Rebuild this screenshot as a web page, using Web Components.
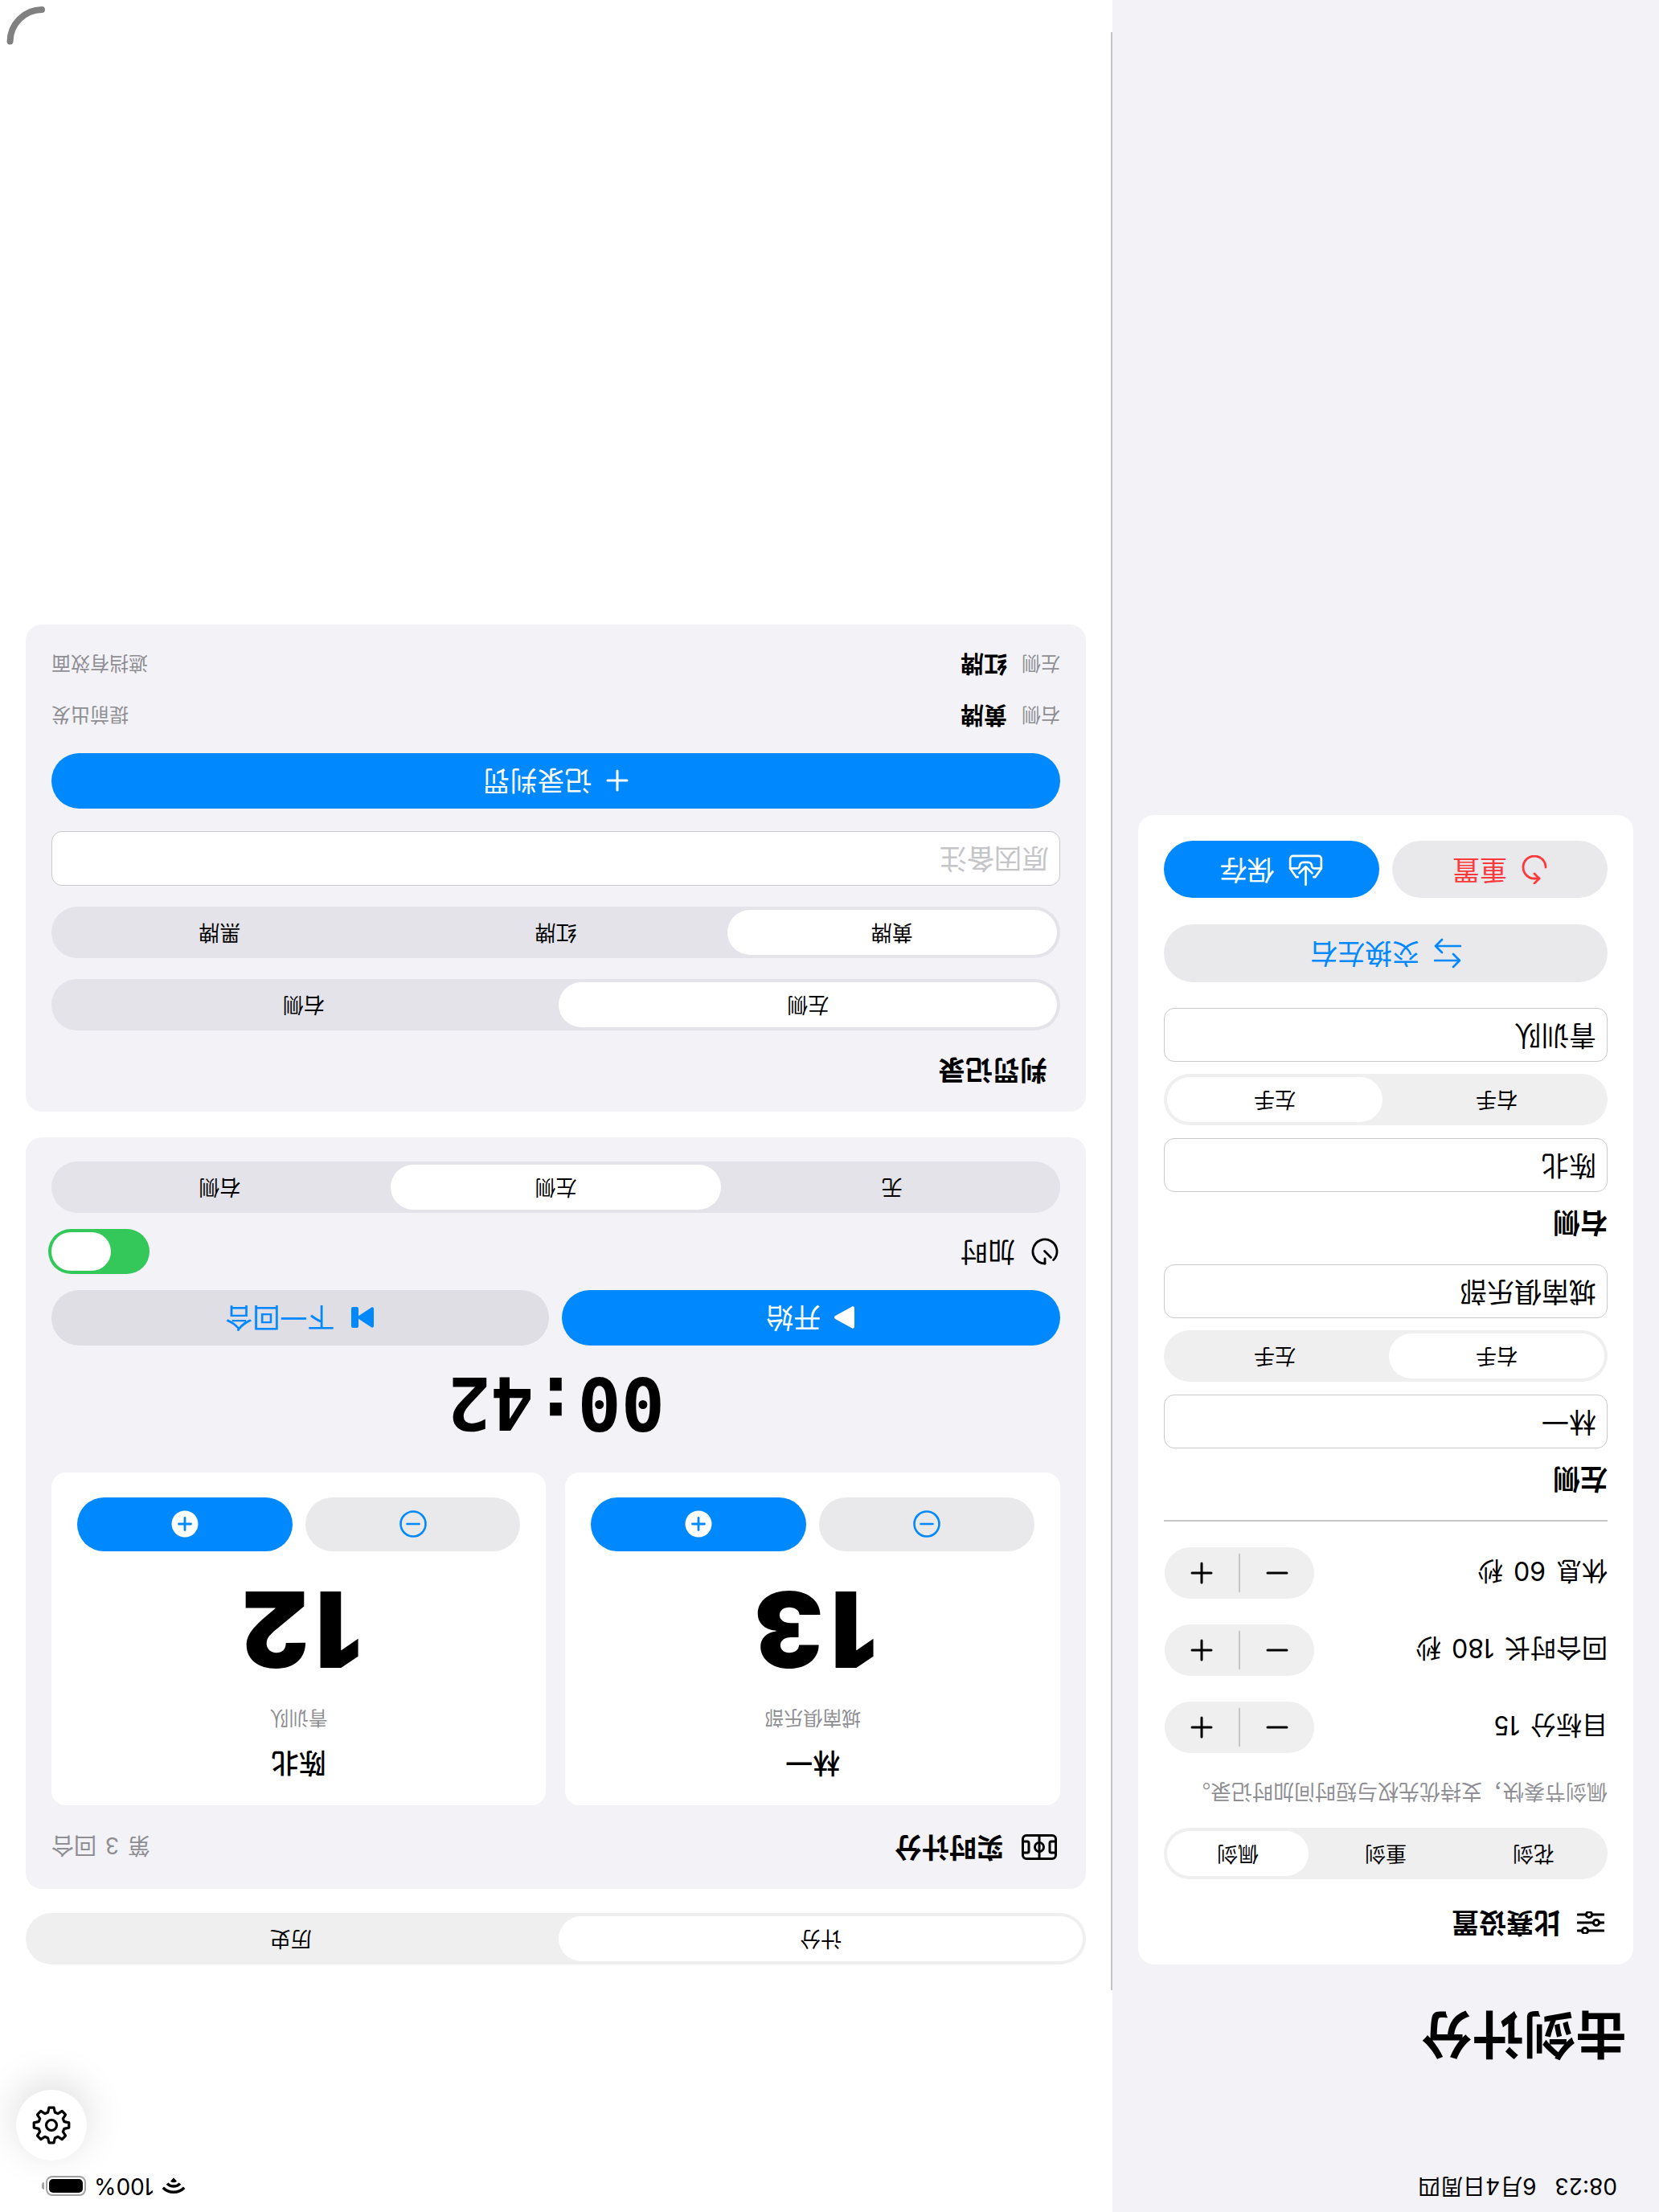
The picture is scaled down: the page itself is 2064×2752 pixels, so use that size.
<!DOCTYPE html>
<html lang="zh"><head><meta charset="utf-8"><style>
html,body{margin:0;padding:0;background:#fff}
body{width:2064px;height:2752px;overflow:hidden;font-family:Inter,"Noto Sans CJK SC",sans-serif;color:#000}
</style></head><body>
<fencing-app></fencing-app>
<script>
const I={
 sliders:`<svg width="34" height="28" viewBox="0 0 34 28" fill="none" stroke="currentColor" stroke-width="3" stroke-linecap="round"><path d="M1 4h19M28 4h5M1 14h5M14 14h19M1 24h14M23 24h10"/><circle cx="24" cy="4" r="3.6"/><circle cx="10" cy="14" r="3.6"/><circle cx="19" cy="24" r="3.6"/></svg>`,
 field:`<svg width="44" height="32" viewBox="0 0 44 32" fill="none" stroke="currentColor" stroke-width="3"><rect x="1.5" y="1.5" width="41" height="29" rx="4.5"/><path d="M22 2v28"/><circle cx="22" cy="16" r="5.5"/><path d="M2 9h5a2 2 0 0 1 2 2v10a2 2 0 0 1-2 2H2M42 9h-5a2 2 0 0 0-2 2v10a2 2 0 0 0 2 2h5"/></svg>`,
 timer:`<svg width="34" height="34" viewBox="0 0 34 34" fill="none" stroke="currentColor" stroke-width="2.8" stroke-linecap="round"><path d="M17 2a15 15 0 1 1-10.6 4.4"/><path d="M17 2v6"/><path d="M17.5 17.5 9.5 9.5"/></svg>`,
 play:`<svg width="28" height="30" viewBox="0 0 28 30" fill="currentColor"><path d="M2 3.5C2 1.6 3.8.7 5.3 1.7l20.5 11.4c1.6.9 1.6 3 0 3.9L5.3 28.3C3.8 29.3 2 28.4 2 26.5z"/></svg>`,
 next:`<svg width="32" height="28" viewBox="0 0 32 28" fill="currentColor"><path d="M2 3.5C2 1.6 3.7.8 5 1.8L21 12.2V3a2 2 0 0 1 2-2h5a2 2 0 0 1 2 2v22a2 2 0 0 1-2 2h-5a2 2 0 0 1-2-2v-9.2L5 26.2C3.700 27.2 2 26.4 2 24.5z"/></svg>`,
 plusC:`<svg width="34" height="34" viewBox="0 0 34 34"><circle cx="17" cy="17" r="16.5" fill="#fff"/><path d="M17 9.5v15M9.5 17h15" stroke="#0088ff" stroke-width="2.8" stroke-linecap="round"/></svg>`,
 minusC:`<svg width="34" height="34" viewBox="0 0 34 34" fill="none" stroke="#0088ff" stroke-width="2.6"><circle cx="17" cy="17" r="15.5"/><path d="M9.5 17h15" stroke-linecap="round"/></svg>`,
 plus:`<svg width="28" height="28" viewBox="0 0 28 28" fill="none" stroke="currentColor" stroke-width="3" stroke-linecap="round"><path d="M14 2v24M2 14h24"/></svg>`,
 minus:`<svg width="28" height="28" viewBox="0 0 28 28" fill="none" stroke="currentColor" stroke-width="3" stroke-linecap="round"><path d="M2 14h24"/></svg>`,
 swap:`<svg width="34" height="38" viewBox="0 0 34 38" fill="none" stroke="currentColor" stroke-width="2.6" stroke-linecap="round" stroke-linejoin="round"><path d="M33 10H2M10 2 2 10l8 8"/><path d="M1 28h31M24 20l8 8-8 8"/></svg>`,
 reset:`<svg width="32" height="36" viewBox="0 0 32 36" fill="none" stroke="currentColor" stroke-width="2.8" stroke-linecap="round" stroke-linejoin="round"><path d="M10 7h6a14 14 0 1 1-14 14"/><path d="M16 1 10 7l6 6"/></svg>`,
 tray:`<svg width="43" height="43" viewBox="0 0 40 40" fill="none" stroke="currentColor" stroke-width="2.5" stroke-linecap="round" stroke-linejoin="round"><path d="M20 2v21M12.5 15.5 20 23l7.5-7.5"/><path d="M11 11H9L2 21v11a3.5 3.5 0 0 0 3.5 3.5h29A3.5 3.5 0 0 0 38 32V21l-7-10h-2"/><path d="M2 21h8a3 3 0 0 1 3 3 4 4 0 0 0 4 4h6a4 4 0 0 0 4-4 3 3 0 0 1 3-3h8"/></svg>`
};
function gearPath(){
 const n=8,cx=24,cy=24,ro=22,ri=16.5;let d='';
 for(let k=0;k<n;k++){
  const a=k*2*Math.PI/n-Math.PI/2,w=Math.PI/n;
  [[ri,a-w*0.68],[ro,a-w*0.36],[ro,a+w*0.36],[ri,a+w*0.68]].forEach((q,i)=>{
   d+=(k===0&&i===0?'M':'L')+(cx+q[0]*Math.cos(q[1])).toFixed(2)+' '+(cy+q[0]*Math.sin(q[1])).toFixed(2);});
 }
 return d+'Z';
}
I.gear=`<svg width="48" height="48" viewBox="0 0 48 48" fill="none" stroke="#000" stroke-width="3.2" stroke-linejoin="round"><path d="${gearPath()}"/><circle cx="24" cy="24" r="6.5"/></svg>`;

function def(name,css,html){
 customElements.define(name,class extends HTMLElement{
  constructor(){super();this.attachShadow({mode:'open'});}
  connectedCallback(){
   if(this._r)return;this._r=1;
   const h=typeof html==='function'?html(this):html;
   this.shadowRoot.innerHTML=`<style>${css}</style>${h}`;
  }
 });
}
def('seg-control',`
 :host{display:grid;grid-auto-flow:column;grid-auto-columns:1fr;gap:8px;padding:4px;height:64px;box-sizing:border-box;border-radius:32px;background:rgba(120,120,128,.12);font-size:26px;color:#000}
 span{display:flex;align-items:center;justify-content:center;border-radius:28px;line-height:1}
 .on{background:#fff}
`,e=>(e.getAttribute('items')||'').split(',').map((t,i)=>`<span class="${i==e.getAttribute('selected')?'on':''}">${t}</span>`).join(''));

def('pill-button',`
 :host{display:flex;align-items:center;justify-content:center;gap:var(--gap,16px);height:var(--h,69px);border-radius:36px;font-size:34px;line-height:1;background:rgba(120,120,128,.16);color:#0088ff;flex:1 1 0;min-width:0}
 :host([tone=blue]){background:#0088ff;color:#fff}
 :host([tone=red]){color:#ff383c}
 svg{display:block}
`,e=>`${I[e.getAttribute('icon')]||''}<slot></slot>`);

def('text-field',`
 :host{display:flex;align-items:center;height:67px;box-sizing:border-box;padding:0 13px;background:#fff;border:1.5px solid #c9c9cc;border-radius:13px;font-size:34px;line-height:1;color:#000}
 :host([placeholder]){color:#c5c5c8}
`,`<slot></slot>`);

def('step-row',`
 :host{display:flex;align-items:center;justify-content:space-between;height:64px;font-size:32px;word-spacing:4px}
 .st{display:flex;align-items:center;width:186px;height:64px;border-radius:32px;background:rgba(120,120,128,.12);margin-right:1px}
 .b{flex:1;display:flex;align-items:center;justify-content:center}
 i{width:2px;height:48px;background:#c6c6c8}
`,e=>`<span><slot></slot></span><div class="st"><div class="b">${I.minus}</div><i></i><div class="b">${I.plus}</div></div>`);

def('sec-head',`
 :host{display:flex;align-items:center;gap:var(--gap,22px);height:40px;font-size:var(--fs,34px);font-weight:700;line-height:1}
 svg{display:block}
`,e=>`${I[e.getAttribute('icon')]||''}<slot></slot>`);

def('fencer-card',`
 :host{display:flex;flex-direction:column;align-items:center;background:#fff;border-radius:18px;height:414px;box-sizing:border-box;padding:0 32px;flex:1 1 0}
 .n{font-size:34px;font-weight:500;line-height:40px;margin-top:33px}
 .c{font-size:24px;color:#8e8e93;line-height:32px;margin-top:20px}
 .s{font-size:130px;font-weight:900;line-height:130px;margin-top:29px;font-family:Inter,sans-serif;letter-spacing:8px}
 .r{display:flex;gap:16px;width:100%;margin-top:32px}
 .x{flex:1;height:67px;border-radius:34px;display:flex;align-items:center;justify-content:center;background:#e9e9eb}
 .x.p{background:#0088ff}
 svg{display:block}
`,e=>`<div class="n">${e.getAttribute('name')}</div><div class="c">${e.getAttribute('club')}</div><div class="s">${e.getAttribute('score')}</div><div class="r"><div class="x">${I.minusC}</div><div class="x p">${I.plusC}</div></div>`);

def('toggle-switch',`
 :host{display:block;width:126px;height:56px;border-radius:28px;background:#34c759;position:relative;margin-right:-4px}
 b{position:absolute;right:4px;top:4px;width:74px;height:48px;border-radius:24px;background:#fff}
`,`<b></b>`);

def('penalty-row',`
 :host{display:flex;align-items:center;height:64px;font-size:24px;color:#8e8e93}
 b{font-size:29px;color:#000;font-weight:700;margin-left:18px;margin-right:auto}
`,e=>`<span>${e.getAttribute('side')}</span><b>${e.getAttribute('card')}</b><span>${e.getAttribute('why')}</span>`);

def('status-time',`
 :host{display:flex;align-items:center;gap:23px;height:64px;padding-left:52px;font-size:28px;line-height:1}
`,`<span>08:23</span><span>6月4日周四</span>`);

def('status-right',`
 :host{display:flex;align-items:center;justify-content:flex-end;gap:10px;height:64px;padding-right:20px;font-size:28px;line-height:1}
 .bat{position:relative;width:50px;height:25px;box-sizing:border-box;border:2px solid #a3a3a3;border-radius:8px;padding:2px;margin-right:5px}
 .bat b{display:block;height:100%;background:#000;border-radius:5px}
 .bat i{position:absolute;right:-7px;top:6px;width:3px;height:9px;background:#a3a3a3;border-radius:0 3px 3px 0}
 svg{display:block}
`,`<svg width="30" height="21" viewBox="0 0 30 21" fill="none" stroke="#000" stroke-width="3.5"><path d="M1.8 8.2a18.5 18.5 0 0 1 26.4 0"/><path d="M7 13.4a11 11 0 0 1 16 0"/><path d="M15 20.5l-4-4.200a5.8 5.8 0 0 1 8 0z" fill="#000" stroke="none"/></svg><span>100%</span><div class="bat"><b></b><i></i></div>`);

def('gear-button',`
 :host{position:absolute;left:1956px;top:64px;width:88px;height:88px;border-radius:50%;background:#fff;box-shadow:0 10px 50px rgba(0,0,0,.14);display:flex;align-items:center;justify-content:center}
 svg{display:block}
`,()=>I.gear);

def('corner-arc',`
 :host{position:absolute;right:0;bottom:0;width:64px;height:64px}
 svg{display:block}
`,`<svg width="64" height="64" viewBox="0 0 64 64" fill="none" stroke="#808080" stroke-width="8" stroke-linecap="round"><path d="M51.5 12.5A40 40 0 0 1 12 52"/></svg>`);

def('side-panel',`
 :host{display:block;width:680px;height:2752px;box-sizing:border-box;background:#f2f2f7;flex:none}
 h1{margin:0 0 0 40px;font-size:64px;line-height:80px;font-weight:700;height:80px;padding-top:117px}
 .card{margin:47px 32px 0;background:#fff;border-radius:20px;height:1430px;box-sizing:border-box;padding:32px 32px 0}
 .note{font-size:26px;line-height:32px;color:#8e8e93;margin-top:29px;white-space:nowrap}
 hr{border:0;height:1.5px;background:#c6c6c8;margin:32px 0 0}
 .two{display:flex;gap:16px}
`,`<status-time></status-time><h1>击剑计分</h1>
<div class="card">
 <sec-head icon="sliders" style="--gap:20px;margin-left:4px">比赛设置</sec-head>
 <seg-control style="margin-top:34px" items="花剑,重剑,佩剑" selected="2"></seg-control>
 <div class="note">佩剑节奏快\uFF0C支持优先权与短时间加时记录。</div>
 <step-row style="margin-top:32px">目标分 15</step-row>
 <step-row style="margin-top:32px">回合时长 180 秒</step-row>
 <step-row style="margin-top:32px">休息 60 秒</step-row>
 <hr>
 <sec-head style="margin-top:31px">左侧</sec-head>
 <text-field style="margin-top:18px">林一</text-field>
 <seg-control style="margin-top:16px" items="右手,左手" selected="0"></seg-control>
 <text-field style="margin-top:15px">城南俱乐部</text-field>
 <sec-head style="margin-top:32px">右侧</sec-head>
 <text-field style="margin-top:18px">陈北</text-field>
 <seg-control style="margin-top:16px" items="右手,左手" selected="1"></seg-control>
 <text-field style="margin-top:15px">青训队</text-field>
 <pill-button icon="swap" style="--h:72px;--gap:18px;margin-top:32px">交换左右</pill-button>
 <div class="two" style="margin-top:33px">
  <pill-button tone="red" icon="reset" style="--h:71px;--gap:18px">重置</pill-button>
  <pill-button tone="blue" icon="tray" style="--h:71px;--gap:18px">保存</pill-button>
 </div>
</div>`);

def('main-panel',`
 :host{display:block;flex:1;min-width:0;box-sizing:border-box;padding:0 32px 0 33px;position:relative}
 .card{background:#f2f2f7;border-radius:20px;box-sizing:border-box;padding:32px 32px 0}
 .hd{display:flex;align-items:center;justify-content:space-between;height:40px;font-size:28px;color:#8e8e93;word-spacing:3px}
 .hd sec-head{color:#000;margin-left:4px;word-spacing:0}
 .f{display:flex;gap:24px;margin-top:32px}
 .t{height:158px;display:flex;align-items:center;justify-content:center;padding-top:15px;box-sizing:border-box;font:700 90px/1 "DejaVu Sans Mono",monospace}
 .two{display:flex;gap:16px}
 .ot{display:flex;align-items:center;justify-content:space-between;height:56px;margin-top:20px}
 .ot sec-head{--gap:20px;margin-left:2px}
 .ph{height:244px}
`,`<status-right></status-right><div class="ph"></div>
<seg-control items="计分,历史" selected="0"></seg-control>
<div class="card" style="margin-top:30px;height:935px">
 <div class="hd"><sec-head icon="field">实时计分</sec-head><span>第 3 回合</span></div>
 <div class="f">
  <fencer-card name="林一" club="城南俱乐部" score="13"></fencer-card>
  <fencer-card name="陈北" club="青训队" score="12"></fencer-card>
 </div>
 <div class="t">00:42</div>
 <div class="two"><pill-button tone="blue" icon="play">开始</pill-button><pill-button icon="next" style="--gap:19px">下一回合</pill-button></div>
 <div class="ot"><sec-head icon="timer" style="font-weight:400">加时</sec-head><toggle-switch></toggle-switch></div>
 <seg-control style="margin-top:20px" items="无,左侧,右侧" selected="1"></seg-control>
</div>
<div class="card" style="margin-top:32px;height:606px">
 <sec-head style="margin-left:16px">判罚记录</sec-head>
 <seg-control style="margin-top:29px" items="左侧,右侧" selected="0"></seg-control>
 <seg-control style="margin-top:26px" items="黄牌,红牌,黑牌" selected="0"></seg-control>
 <text-field placeholder style="margin-top:26px;height:68px">原因备注</text-field>
 <pill-button tone="blue" icon="plus" style="margin-top:28px;--gap:18px">记录判罚</pill-button>
 <penalty-row style="margin-top:13px" side="右侧" card="黄牌" why="提前出发"></penalty-row>
 <penalty-row side="左侧" card="红牌" why="遮挡有效面"></penalty-row>
</div>`);

def('fencing-app',`
 :host{display:flex;position:relative;width:2064px;height:2752px;transform:rotate(180deg);overflow:hidden;background:#fff}
 .line{position:absolute;left:680px;width:2px;top:276px;height:2436px;background:#c4c4c4}
`,`<side-panel></side-panel><main-panel></main-panel><div class="line"></div><gear-button></gear-button><corner-arc></corner-arc>`);
</script></body></html>
